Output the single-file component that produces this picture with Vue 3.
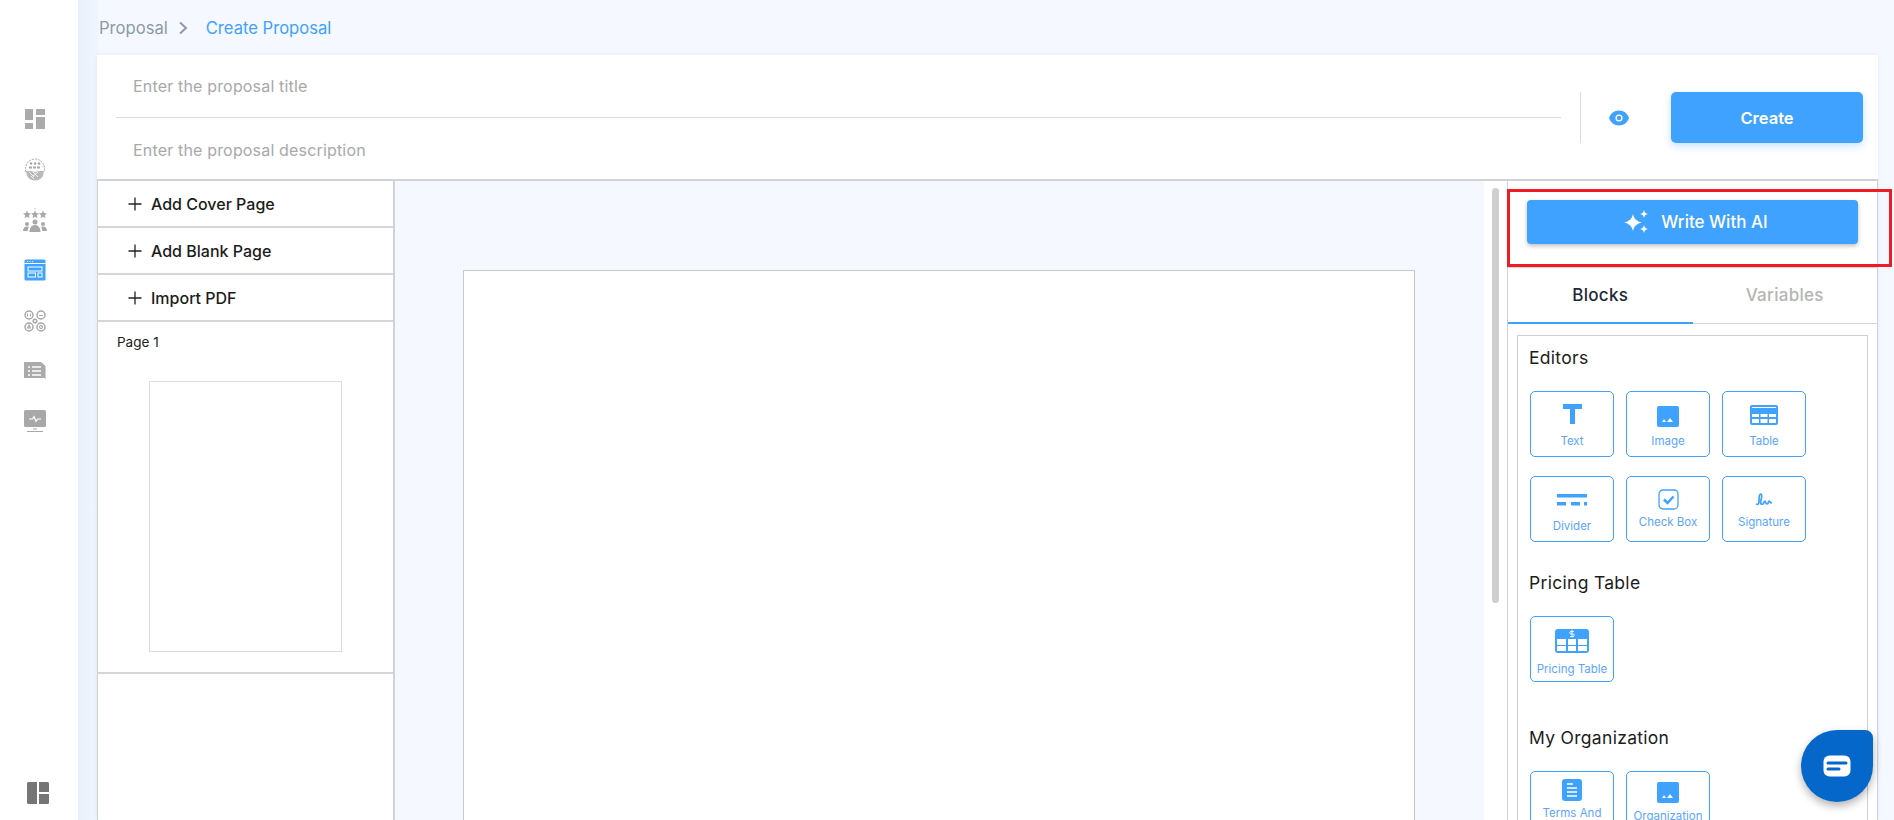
<template>
  <div class="app">
    <aside class="sidebar">
      <nav class="nav">
        <a class="nav-item">
          <svg width="22" height="22" viewBox="0 0 22 22" fill="#ababab"><rect x="1" y="1" width="8" height="11"/><rect x="12" y="1" width="9" height="6"/><rect x="1" y="15" width="8" height="6"/><rect x="12" y="9" width="9" height="12"/></svg>
        </a>
        <a class="nav-item">
          <svg width="22" height="24" viewBox="0 0 22 24" fill="none" stroke="#a8a8a8"><path d="M2 15C0 8 5 2 11 2s11 6 9 13" stroke-dasharray="2 1"/><circle cx="7" cy="6.500" r="1.300" fill="#a8a8a8" stroke="none"/><circle cx="11" cy="6.500" r="1.300" fill="#a8a8a8" stroke="none"/><circle cx="15" cy="6.500" r="1.300" fill="#a8a8a8" stroke="none"/><path d="M5 10.500h12" stroke-width="2.200" stroke-dasharray="3 1"/><path d="M2 14h5l4 1 4-1h5l-1 5c-2 3-5 4.500-8 4.500S5 22 3 19z" stroke="none" fill="#b9b9b9"/><path d="M5 15l5 5M9 15l5 5M14 15l-5 4M7 19l3 3" stroke="#fff" stroke-width=".8"/></svg>
        </a>
        <a class="nav-item">
          <svg width="24" height="24" viewBox="0 0 24 24" fill="#a8a8a8">
            <path v-for="x in [4, 12, 20]" :key="x" :transform="`translate(${x} 6.500) scale(1.150)`" d="M0-3.500l1 2.300 2.500.3-1.900 1.600.6 2.500L0 1.900l-2.200 1.300.6-2.500-1.900-1.600 2.500-.3z"/>
            <path d="M12 0v1.500" stroke="#a8a8a8" stroke-width=".7"/>
            <circle cx="12" cy="14" r="2.500"/><path d="M6.500 24c0-4 2-7 5.500-7s5.500 3 5.500 7z"/>
            <circle cx="4" cy="16" r="2"/><path d="M0 23c0-2.700 1.500-4.500 4-4.500.8 0 1.400.2 2 .5-1 1.200-1.300 2.800-1.300 4z"/>
            <circle cx="20" cy="16" r="2"/><path d="M24 23c0-2.700-1.500-4.500-4-4.500-.8 0-1.400.2-2 .5 1 1.200 1.300 2.800 1.300 4z"/>
          </svg>
        </a>
        <a class="nav-item">
          <svg width="22" height="22" viewBox="0 0 22 22"><rect x=".5" y=".5" width="21" height="21" rx="1.500" fill="#3fa2ff"/><path d="M.5 4.500h21" stroke="#fff"/><rect x="4" y="8" width="14" height="4" fill="none" stroke="#fff"/><rect x="4" y="14" width="7.500" height="4" fill="none" stroke="#fff"/><rect x="14" y="14" width="4" height="4" fill="none" stroke="#fff"/><circle cx="3.500" cy="2.500" r=".6" fill="#fff"/><circle cx="6" cy="2.500" r=".6" fill="#fff"/><circle cx="8.500" cy="2.500" r=".6" fill="#fff"/></svg>
        </a>
        <a class="nav-item">
          <svg width="22" height="22" viewBox="0 0 22 22" fill="none" stroke="#a8a8a8" stroke-width="1.500"><circle cx="5" cy="5" r="4"/><circle cx="17" cy="5" r="4"/><circle cx="5" cy="17" r="4"/><circle cx="17" cy="17" r="4"/><circle cx="11" cy="11" r="1.800"/><path d="M3.500 6.500v-3M6.500 6.500v-3M15 5.500h4M5 15l-1.500 3h3zM17 15.500a1.500 1.500 0 1 0 .01 0" stroke-width="1.100"/></svg>
        </a>
        <a class="nav-item">
          <svg width="22" height="18" viewBox="0 0 22 18"><path d="M0 0h17l4 3.500V16H0z" fill="#ababab"/><path d="M21.500 4v13" stroke="#d0d0d0"/><path d="M4 5h2M8 5h9M4 9h2M8 9h9M4 13h2M8 13h9" stroke="#fff" stroke-width="1.500"/></svg>
        </a>
        <a class="nav-item">
          <svg width="22" height="22" viewBox="0 0 22 22"><rect y="0" width="22" height="17" rx="1.500" fill="#a8a8a8"/><path d="M5 9h3.500l1.500-2.500 2 5 1.500-2.500H17" fill="none" stroke="#fff" stroke-width="1.200"/><path d="M9 19h4" stroke="#a8a8a8"/><path d="M3 21.500h16" stroke="#a8a8a8"/></svg>
        </a>
      </nav>
      <a class="nav-bottom">
        <svg width="24" height="24" viewBox="0 0 24 24" fill="#757575"><path d="M2.500 1H11v22H2.500A1.500 1.500 0 0 1 1 21.500v-19A1.500 1.500 0 0 1 2.500 1z"/><path d="M13 1h8.500A1.500 1.500 0 0 1 23 2.500V11H13z"/><path d="M13 13h10v8.500a1.500 1.500 0 0 1-1.500 1.500H13z"/></svg>
      </a>
    </aside>

    <main class="main">
      <div class="breadcrumb">
        <span class="crumb">Proposal</span>
        <svg class="crumb-arrow" width="10" height="14" viewBox="0 0 10 14" fill="none" stroke="#8d99ab" stroke-width="2"><path d="M2 1.500L8 7l-6 5.500"/></svg>
        <span class="crumb-active">Create Proposal</span>
      </div>

      <div class="card">
        <header class="head">
          <div class="fields">
            <div class="field">Enter the proposal title</div>
            <div class="field">Enter the proposal description</div>
          </div>
          <div class="actions">
            <svg width="22" height="16" viewBox="0 0 22 16"><path d="M11 .5C6 .5 2.500 3.500 1 8c1.500 4.500 5 7.500 10 7.500s8.500-3 10-7.500C19.500 3.500 16 .5 11 .5z" fill="#3fa2ff"/><circle cx="11" cy="8" r="3.600" fill="#fff"/><circle cx="11" cy="8" r="2.200" fill="#3fa2ff"/></svg>
            <button class="create-btn">Create</button>
          </div>
        </header>

        <div class="editor">
          <section class="pages">
            <div v-for="label in addItems" :key="label" class="add-row">
              <svg width="14" height="14" viewBox="0 0 14 14" stroke="#222" stroke-width="1.300"><path d="M7 .5v13M.5 7h13"/></svg>
              <span>{{ label }}</span>
            </div>
            <div class="page-entry">
              <div class="page-label">Page 1</div>
              <div class="thumb"></div>
            </div>
          </section>

          <section class="canvas">
            <div class="sheet"></div>
          </section>
          <div class="scroll-strip"><div class="scroll-thumb"></div></div>

          <section class="tools">
            <div class="ai-row">
              <button class="ai-btn">
                <svg width="28" height="28" viewBox="0 0 28 28" fill="#fff"><path d="M10 6c1 4.500 3 7 9 8.500-6 1.500-8 4-9 8.500-1-4.500-3-7-9-8.500C7 13 9 10.500 10 6z"/><path d="M21 2c.5 2.300 1.500 3.500 4 4-2.500.5-3.500 1.700-4 4-.5-2.300-1.500-3.500-4-4 2.500-.5 3.500-1.700 4-4zM21 17c.5 2.300 1.500 3.500 4 4-2.500.5-3.500 1.700-4 4-.5-2.300-1.500-3.500-4-4 2.500-.5 3.500-1.700 4-4z"/></svg>
                Write With AI
              </button>
            </div>
            <div class="tabs">
              <div class="tab tab-active">Blocks</div>
              <div class="tab">Variables</div>
            </div>
            <div class="blocks">
              <template v-for="group in groups" :key="group.title">
                <h3 class="group-title" :class="group.cls">{{ group.title }}</h3>
                <div class="tiles">
                  <div v-for="t in group.items" :key="t.label" class="tile" :style="{ paddingTop: t.pad + 'px' }">
                    <svg class="tile-icon" :width="t.w" :height="t.h" :viewBox="`0 0 ${t.w} ${t.h}`" v-html="t.svg"></svg>
                    <span class="tile-label" :style="{ marginTop: t.gap + 'px' }">{{ t.label }}</span>
                  </div>
                </div>
              </template>
            </div>
          </section>
        </div>
      </div>
    </main>

    <div class="highlight"></div>
    <button class="chat">
      <svg width="28" height="22" viewBox="0 0 28 22"><rect x=".5" y=".5" width="27" height="21" rx="6" fill="#fff"/><path d="M5 8h18" stroke="#0567c9" stroke-width="3" stroke-linecap="round"/><path d="M5 14h11" stroke="#0567c9" stroke-width="3" stroke-linecap="round"/></svg>
    </button>
  </div>
</template>

<script setup>
const addItems = ['Add Cover Page', 'Add Blank Page', 'Import PDF']

const imageIcon = '<rect width="22" height="21" rx="2" fill="#3fa2ff"/><path d="M5 16l2-3 2 3zM10 16l3-4 3 4z" fill="#fff"/>'

const groups = [
  {
    title: 'Editors',
    items: [
      { label: 'Text', pad: 12, gap: 10, w: 19, h: 20, svg: '<path d="M0 0h19v5h-7v15H7V5H0z" fill="#3fa2ff"/>' },
      { label: 'Image', pad: 14, gap: 7, w: 22, h: 21, svg: imageIcon },
      { label: 'Table', pad: 13, gap: 9, w: 28, h: 20, svg: '<rect width="28" height="20" rx="2" fill="#3fa2ff"/><path d="M2 2.500h24" stroke="#fff"/><path d="M2 9h7v3H2zM10.500 9h7v3h-7zM19 9h7v3h-7zM2 14h7v4H2zM10.500 14h7v4h-7zM19 14h7v4h-7z" fill="#fff"/>' },
      { label: 'Divider', pad: 17, gap: 13, w: 30, h: 12, svg: '<path d="M0 0h30v3.500H0zM0 8h9v3.500H0zM14 8h9v3.500h-9zM27 8h3v3.500h-3z" fill="#3fa2ff"/>' },
      { label: 'Check Box', pad: 12, gap: 5, w: 21, h: 21, svg: '<rect x="1" y="1" width="19" height="19" rx="4" fill="none" stroke="#3fa2ff" stroke-width="1.300"/><path d="M6 10.500l3.500 3.500 6-6.500" fill="none" stroke="#3fa2ff" stroke-width="2.500"/>' },
      { label: 'Signature', pad: 16, gap: 9, w: 18, h: 13, svg: '<path d="M1 11c2 1 3 0 3-3 0-3 0-7 2-7 1 0 1 3 0 6-1 3 0 5 2 4 1-1 1-3 2-3s0 3 2 3 1-3 2-3 1 2 3 2" fill="none" stroke="#3fa2ff" stroke-width="1.700"/>' }
    ]
  },
  {
    title: 'Pricing Table',
    cls: 'title-pricing',
    items: [
      { label: 'Pricing Table', pad: 12, gap: 9, w: 34, h: 24, svg: '<rect width="34" height="24" rx="3" fill="#3fa2ff"/><path d="M2 10h9v6H2zM13 10h8v6h-8zM23 10h9v6h-9zM2 17h9v5H2zM13 17h8v5h-8zM23 17h9v5h-9z" fill="#fff"/><path d="M17 .5v8M19 2.500h-3a1 1 0 0 0 0 2.500h2a1 1 0 0 1 0 2.500h-3" stroke="#fff" fill="none" stroke-width=".9"/>' }
    ]
  },
  {
    title: 'My Organization',
    cls: 'title-org',
    items: [
      { label: 'Terms And Conditions', pad: 7, gap: 5, w: 20, h: 22, svg: '<rect width="20" height="22" rx="3" fill="#3fa2ff"/><path d="M5 5h6M5 9h10M5 13h10M5 17h10" stroke="#fff" stroke-width="1.300"/>' },
      { label: 'Organization', pad: 10, gap: 6, w: 22, h: 21, svg: imageIcon }
    ]
  }
]
</script>

<style>
html, body { margin: 0; padding: 0; background: #fff; overflow: hidden; }
</style>

<style scoped>
.app {
  position: relative;
  display: flex;
  width: 1894px;
  height: 820px;
  overflow: hidden;
  font-family: Inter, "Open Sans", sans-serif;
  color: #1c1c1c;
}

.sidebar {
  width: 78px;
  flex: none;
  background: #fff;
  display: flex;
  flex-direction: column;
  align-items: center;
  padding: 107px 8px 0 0;
  box-sizing: border-box;
}
.nav {
  display: flex;
  flex-direction: column;
  align-items: center;
  gap: 26.400px;
}
.nav-item {
  width: 24px;
  height: 24px;
  display: flex;
  align-items: center;
  justify-content: center;
}
.nav-bottom {
  margin-top: auto;
  margin-bottom: 15px;
  margin-left: 6px;
  height: 24px;
}

.main {
  flex: 1;
  min-width: 0;
  background: linear-gradient(90deg, #e9f0fb 0, #f0f5fd 19px, #f5f9ff 22px);
  padding: 0 16px 0 19px;
  display: flex;
  flex-direction: column;
}

.breadcrumb {
  height: 55px;
  display: flex;
  align-items: center;
  font-size: 16.600px;
  padding-left: 2px;
  box-sizing: border-box;
}
.crumb { color: #8d99ab; }
.crumb-arrow { margin: 0 18px 0 10px; }
.crumb-active { color: #3fa2ff; }

.card {
  flex: 1;
  min-height: 0;
  display: flex;
  flex-direction: column;
  background: #fff;
  box-shadow: 0 0 4px rgba(90, 110, 150, .12);
}

.head {
  height: 125px;
  flex: none;
  display: flex;
  align-items: center;
}
.fields {
  flex: 1;
  padding-left: 19px;
}
.field {
  height: 62px;
  line-height: 62px;
  padding-left: 17px;
  font-size: 16px;
  letter-spacing: .17px;
  color: #a8a8a8;
  box-sizing: border-box;
}
.field:first-child {
  line-height: 60px;
  border-bottom: 1px solid #dcdcdc;
}
.field:last-child {
  line-height: 64px;
}
.actions {
  width: 298px;
  flex: none;
  margin-left: 19px;
  height: 51px;
  border-left: 1px solid #dcdcdc;
  display: flex;
  align-items: center;
  box-sizing: border-box;
  padding-left: 27px;
}
.create-btn {
  width: 192px;
  height: 51px;
  margin-left: 41px;
  border: 0;
  border-radius: 5px;
  background: #3fa2ff;
  color: #fff;
  font: 600 16.500px Inter, sans-serif;
  box-shadow: 0 3px 8px rgba(63, 162, 255, .3);
}

.editor {
  flex: 1;
  min-height: 0;
  display: flex;
  border-top: 2px solid #cfd2d6;
  margin-top: -1px;
}

.pages {
  width: 298px;
  flex: none;
  box-sizing: border-box;
  border-left: 1px solid #cfd2d6;
  border-right: 2px solid #cfd2d6;
}
.add-row {
  height: 47px;
  display: flex;
  align-items: center;
  gap: 9px;
  padding-left: 30px;
  border-bottom: 2px solid #d6d6d6;
  box-sizing: border-box;
  font-size: 16px;
  font-weight: 500;
}
.page-entry {
  height: 352px;
  box-sizing: border-box;
  border-bottom: 2px solid #d6d6d6;
  padding: 10px 0 0 19px;
}
.page-label {
  font-size: 13.500px;
  line-height: 20px;
}
.thumb {
  width: 193px;
  height: 271px;
  margin: 29px 0 0 32px;
  border: 1px solid #dcdcdc;
  box-sizing: border-box;
}

.canvas {
  flex: 1;
  min-width: 0;
  background: #f5f9ff;
  padding: 89px 0 0 68px;
  overflow: hidden;
}
.sheet {
  width: 952px;
  height: 700px;
  background: #fff;
  border: 1px solid #c9c9c9;
  box-sizing: border-box;
}
.scroll-strip {
  width: 23px;
  flex: none;
  padding: 7px 0 0 8px;
  box-sizing: border-box;
}
.scroll-thumb {
  width: 7px;
  height: 415px;
  border-radius: 4px;
  background: #cfcfcf;
}

.tools {
  width: 371px;
  flex: none;
  box-sizing: border-box;
  border-left: 1px solid #cfd2d6;
  border-right: 1px solid #cfd2d6;
}
.ai-row {
  height: 87px;
  box-sizing: border-box;
  padding: 19px 19px 0 19px;
  border-bottom: 1px solid #d6d6d6;
}
.ai-btn {
  width: 100%;
  height: 44px;
  display: flex;
  align-items: center;
  justify-content: center;
  gap: 10px;
  border: 0;
  border-radius: 4px;
  padding: 0 0 0 6px;
  background: #3fa2ff;
  color: #fff;
  font: 500 17px Inter, sans-serif;
  box-shadow: 0 2px 4px rgba(0, 0, 0, .25);
}
.tabs {
  display: flex;
  height: 56px;
  border-bottom: 1px solid #d6d6d6;
  box-sizing: border-box;
}
.tab {
  flex: 1;
  display: flex;
  align-items: center;
  justify-content: center;
  padding-bottom: 2px;
  font-size: 17px;
  letter-spacing: .3px;
  font-weight: 500;
  color: #b4b4b4;
}
.tab-active {
  color: #1e2a38;
  border-bottom: 2px solid #3fa2ff;
  margin-bottom: -1px;
  padding-bottom: 0;
}
.blocks {
  margin: 11px 9px 0;
  padding: 0 0 0 11px;
  border: 1px solid #cfcfcf;
  height: 500px;
  box-sizing: border-box;
}
.group-title {
  margin: 0;
  padding-top: 10px;
  font-size: 17.500px;
  letter-spacing: .3px;
  line-height: 24px;
  font-weight: 400;
}
.title-pricing { padding-top: 29px; }
.title-org { padding-top: 44px; }
.tiles {
  display: grid;
  grid-template-columns: repeat(3, 84px);
  column-gap: 12px;
  row-gap: 19px;
  padding: 21px 0 0 1px;
}
.tile {
  height: 66px;
  box-sizing: border-box;
  border: 1px solid #3fa2ff;
  border-radius: 5px;
  display: flex;
  flex-direction: column;
  align-items: center;
}
.tile-icon { flex: none; }
.tile-label {
  font-size: 11.500px;
  line-height: 14px;
  text-align: center;
  color: #5ca5ff;
}

.highlight {
  position: absolute;
  left: 1507px;
  top: 189px;
  width: 385px;
  height: 78px;
  box-sizing: border-box;
  border: 3px solid #ee1c25;
  pointer-events: none;
}
.chat {
  position: absolute;
  left: 1801px;
  top: 730px;
  width: 72px;
  height: 72px;
  border: 0;
  padding: 0;
  display: flex;
  align-items: center;
  justify-content: center;
  background: #0567c9;
  border-radius: 50% 8px 50% 50%;
  box-shadow: 0 4px 8px rgba(0, 0, 0, .3);
}
</style>
